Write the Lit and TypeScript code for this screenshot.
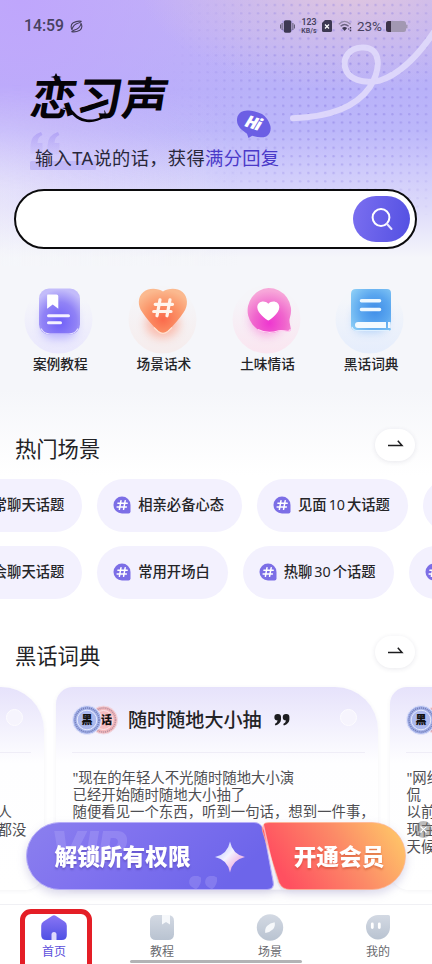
import { LitElement, html, css, svg } from "lit";
import { customElement, property } from "lit/decorators.js";

type Part = string | { num: string };

const CJK = css`"Noto Sans", "Noto Sans CJK SC", sans-serif`;

const quickIcons = {
  tutorial: svg`
    <defs>
      <radialGradient id="a1" cx=".5" cy=".72" r=".7"><stop offset="0" stop-color="#6f5ff8"/><stop offset=".6" stop-color="#9183f6"/><stop offset="1" stop-color="#c3bcfa"/></radialGradient>
      <linearGradient id="c1" x1="0" y1="0" x2="0" y2="1"><stop offset=".2" stop-color="#f5f6fa"/><stop offset="1" stop-color="#e9e7fd"/></linearGradient>
      <filter id="b1" x="-50%" y="-50%" width="200%" height="200%"><feGaussianBlur stdDeviation="5"/></filter>
    </defs>
    <circle cx="34.500" cy="34.500" r="34" fill="url(#c1)"/>
    <rect x="18" y="20" width="34" height="34" rx="10" fill="#8f83ff" opacity=".5" filter="url(#b1)"/>
    <rect x="15" y="3.500" width="41" height="46" rx="10" fill="url(#a1)"/>
    <path d="M17 43.500q3 5.500 9 5.500h19q6 0 9-5.500" fill="none" stroke="#e3deff" stroke-width="1.200"/>
    <path d="M23.500 9.500h9q1.800 0 1.800 1.800v12.500l-5.600-4.300-5.600 4.300v-12.500q0-1.800.4-1.800z" fill="#fff"/>
    <path d="M24.500 30.800h20M24.500 37.800h12" stroke="#f4f1ff" stroke-width="3" stroke-linecap="round"/>`,
  scene: svg`
    <defs>
      <radialGradient id="a2" cx=".5" cy=".68" r=".66"><stop offset="0" stop-color="#fb6a4b"/><stop offset=".55" stop-color="#fb9468"/><stop offset="1" stop-color="#fbb98f"/></radialGradient>
      <linearGradient id="c2" x1="0" y1="0" x2="0" y2="1"><stop offset=".2" stop-color="#f5f5f8"/><stop offset="1" stop-color="#f6ecec"/></linearGradient>
      <filter id="b2" x="-50%" y="-50%" width="200%" height="200%"><feGaussianBlur stdDeviation="5"/></filter>
    </defs>
    <circle cx="34.500" cy="34.500" r="34" fill="url(#c2)"/>
    <ellipse cx="34.500" cy="39" rx="17" ry="14" fill="#ff8060" opacity=".45" filter="url(#b2)"/>
    <path d="M35 6.500C30 3.300 21 2.400 15.500 7c-6 5-6 13.500-1.200 20.300C18 33 24 40 30 46q5 4.600 10 0c6-6 12-13 15.700-18.700C60.500 20.500 60 12 54.500 7 49 2.400 40 3.300 35 6.500z" fill="url(#a2)"/>
    <path d="M26 42.500l4.200 4q4.800 3.800 9.600 0l4.200-4" fill="none" stroke="#ffe0d0" stroke-width="1.200"/>
    <path d="M32 14.800l-3 16M42 14.800l-3 16M27.200 19.300h17.300M25.700 26.500H43" stroke="#fff4ec" stroke-width="3.200" stroke-linecap="round"/>`,
  love: svg`
    <defs>
      <radialGradient id="a3" cx=".5" cy=".78" r=".72"><stop offset="0" stop-color="#ee36d0"/><stop offset=".5" stop-color="#f065cd"/><stop offset="1" stop-color="#f7a7d9"/></radialGradient>
      <linearGradient id="c3" x1="0" y1="0" x2="0" y2="1"><stop offset=".2" stop-color="#f5f5f9"/><stop offset="1" stop-color="#fae5f0"/></linearGradient>
      <filter id="b3" x="-50%" y="-50%" width="200%" height="200%"><feGaussianBlur stdDeviation="5"/></filter>
    </defs>
    <circle cx="34.500" cy="34.500" r="34" fill="url(#c3)"/>
    <circle cx="35" cy="34" r="17" fill="#f462cf" opacity=".45" filter="url(#b3)"/>
    <path d="M36.500 3a22.500 22.500 0 0 1 21.300 30c-.6 2-.4 3.600.2 6.500l.8 4.300q.3 3-2.800 2.700c-3.500-.3-5.500-1.300-9-.4A22.500 22.500 0 1 1 36.500 3z" fill="url(#a3)"/>
    <path d="M26 44.500c7 3.600 14 3.500 20.500 1.300 3.500-1 5.500.3 9 .5q2.800.1 2.600-2.300" fill="none" stroke="#ffd5f2" stroke-width="1.100"/>
    <path d="M36.300 35.500c-2-1-11-7.300-11-13.300 0-6 7.500-7.600 11-3.400 3.500-4.200 11-2.600 11 3.400 0 6-9 12.300-11 13.300z" fill="#fff"/>`,
  dict: svg`
    <defs>
      <radialGradient id="a4" cx=".6" cy=".5" r=".72"><stop offset="0" stop-color="#3f8de8"/><stop offset=".5" stop-color="#5aa6ef"/><stop offset="1" stop-color="#8bcdf6"/></radialGradient>
      <linearGradient id="c4" x1="0" y1="0" x2="0" y2="1"><stop offset=".2" stop-color="#f4f6fa"/><stop offset="1" stop-color="#e5edfc"/></linearGradient>
      <filter id="b4" x="-50%" y="-50%" width="200%" height="200%"><feGaussianBlur stdDeviation="5"/></filter>
    </defs>
    <circle cx="34.500" cy="34.500" r="34" fill="url(#c4)"/>
    <rect x="19" y="22" width="32" height="25" rx="8" fill="#69a9f5" opacity=".45" filter="url(#b4)"/>
    <path d="M21 4h31q4 0 4 4v29.500q-2 3.500 0 7-.5 1-2 1H21q-5 0-5-5V9q0-5 5-5z" fill="url(#a4)"/>
    <path d="M17 42q1.500 3.500 5 3.500h32" fill="none" stroke="#dff0ff" stroke-width="1.100"/>
    <path d="M26.500 15.800h18M26.500 24.500h18" stroke="#eef8ff" stroke-width="3.600" stroke-linecap="round"/>
    <path d="M23 37h28v6H23a3 3 0 0 1 0-6zM53 37h2.500v1.500q-1.200 2 0 4.500H53z" fill="#f3faff"/>`,
};

const navIcons = {
  home: svg`
    <defs><linearGradient id="n1" x1="0" y1="0" x2="0" y2="1"><stop offset="0" stop-color="#8a76f4"/><stop offset="1" stop-color="#4f50e4"/></linearGradient></defs>
    <path d="M14 1.200q1 0 2 .7l8.500 5.600q2.300 1.500 2.300 4.300v9.200q0 5-5 5H6.200q-5 0-5-5v-9.200q0-2.800 2.300-4.300L12 1.900q1-.7 2-.7z" fill="url(#n1)"/>
    <path d="M11.500 26v-5.500a2.500 2.500 0 0 1 5 0V26z" fill="#ded9fd"/>`,
  book: svg`
    <defs><linearGradient id="n2" x1="0" y1="0" x2="0" y2="1"><stop offset="0" stop-color="#d3d9e3"/><stop offset="1" stop-color="#b9c3d1"/></linearGradient></defs>
    <rect x="2" y="1" width="24" height="25" rx="5.500" fill="url(#n2)"/>
    <path d="M14 1h8v9.500l-4-2.500-4 2.500z" fill="#f6f8fb"/>`,
  compass: svg`
    <defs><linearGradient id="n3" x1="0" y1="0" x2="0" y2="1"><stop offset="0" stop-color="#d3d9e3"/><stop offset="1" stop-color="#b9c3d1"/></linearGradient></defs>
    <circle cx="14" cy="13.500" r="13.200" fill="url(#n3)"/>
    <path d="M18.700 8.300q.8 4-1.700 7-3 3-7.700 3.700-.8-4 1.700-7 3-3 7.700-3.700z" fill="#f6f8fb"/>`,
  me: svg`
    <defs><linearGradient id="n4" x1="0" y1="0" x2="0" y2="1"><stop offset="0" stop-color="#d3d9e3"/><stop offset="1" stop-color="#b9c3d1"/></linearGradient></defs>
    <path d="M14 1h10.500q1.500 0 1.500 1.500V13.500A12 12.200 0 1 1 14 1z" fill="url(#n4)"/>
    <path d="M8.300 10v3.500M15.300 10v3.500" stroke="#fff" stroke-width="2.800" stroke-linecap="round"/>`,
};

@customElement("topic-pill")
class TopicPill extends LitElement {
  @property({ attribute: false }) parts: Part[] = [];
  static styles = css`
    :host { display: flex; flex: none; align-items: center; height: 52.500px; box-sizing: border-box; padding: 0 18px 0 16px; border-radius: 27px; background: #f3f1fe; font: 500 14.300px/20px ${CJK}; color: #252528; white-space: nowrap; }
    svg { width: 18px; height: 18px; margin-right: 7px; flex: none; }
    .num { margin: 0 2px; font-weight: 400; }
  `;
  render() {
    return html`<svg viewBox="0 0 18 18">
        <path d="M9 .5A8.500 8.500 0 0 1 17.500 9v6.500q0 2-2 2H9A8.500 8.500 0 0 1 9 .5z" fill="#7c6ee6"/>
        <path d="M8 4.700L6.400 13.300M12.200 4.700L10.600 13.300M4.900 7.200h9.300M4.100 11h9.300" stroke="#fff" stroke-width="1.500" stroke-linecap="round"/>
      </svg>${this.parts.map((p) => (typeof p === "string" ? p : html`<span class="num">${p.num}</span>`))}`;
  }
}

@customElement("section-head")
class SectionHead extends LitElement {
  @property() label = "";
  static styles = css`
    :host { display: flex; align-items: center; justify-content: space-between; height: 32px; padding: 0 17px 0 15px; font: 400 21.300px/32px ${CJK}; color: #232326; }
    .go { width: 40px; height: 32px; border-radius: 16px; background: #fff; box-shadow: 0 1px 5px rgba(40, 40, 80, 0.1); }
    .label { padding-top: 7px; }
    svg { display: block; }
  `;
  render() {
    return html`<span class="label">${this.label}</span>
      <div class="go"><svg width="40" height="32" viewBox="0 0 40 32"><path d="M13 16.600h14l-4.200-4.800" fill="none" stroke="#1c1c1e" stroke-width="1.500"/></svg></div>`;
  }
}

@customElement("slang-card")
class SlangCard extends LitElement {
  @property() heading = "";
  @property({ attribute: false }) lines: string[] = [];
  static styles = css`
    :host { display: block; flex: none; width: 322px; height: 203px; box-sizing: border-box; border-radius: 17px 43px 20px 20px; background: linear-gradient(#e6e2fb 0, #f2f0fd 38px, #fefeff 76px, #fff 100%); box-shadow: 0 1px 4px rgba(80, 80, 120, 0.07); font-family: ${CJK}; }
    .top { display: flex; align-items: center; height: 65px; margin: 0 13px 0 16px; border-bottom: 1px solid #efedf7; }
    .badge { width: 47px; height: 32px; margin-right: 9px; }
    .badge text { font: 900 11px "Noto Sans CJK SC", sans-serif; fill: #111; }
    .title { font-size: 19.100px; line-height: 28px; color: #232326; font-weight: 500; white-space: nowrap; }
    .quote { width: 16px; height: 12px; margin-left: 12px; }
    .dot { width: 15px; height: 15px; border-radius: 50%; margin: -5px 8px 0 auto; background: #f6f4fd; border: 1px solid #fdfcff; }
    .body { padding: 16px 0 0 16.500px; font-size: 14.400px; line-height: 17.200px; color: #4e4e52; white-space: pre; }
  `;
  render() {
    return html`<div class="top">
        <svg class="badge" viewBox="0 0 47 32">
          <circle cx="31.500" cy="16" r="14" fill="#f4b9bd" stroke="#f0d9e4"/>
          <circle cx="31.500" cy="16" r="12" fill="none" stroke="#9f7f95" stroke-width="1.600" stroke-dasharray="1.200 .8" opacity=".65"/>
          <circle cx="31.500" cy="16" r="9.500" fill="#f5bdc0" stroke="#fae3e8"/>
          <circle cx="15" cy="16" r="14.500" fill="#a9b6ec" stroke="#e6e6fb"/>
          <circle cx="15" cy="16" r="12" fill="none" stroke="#5e68a5" stroke-width="1.600" stroke-dasharray="1.200 .8" opacity=".7"/>
          <circle cx="15" cy="16" r="9.800" fill="#acb9ee" stroke="#e4e8fc"/>
          <text x="9.500" y="20">黑</text><text x="29" y="20">话</text>
        </svg>
        <span class="title">${this.heading}</span>
        <svg class="quote" viewBox="0 0 16 12"><path d="M3.600 0h.4a3 3 0 0 1 3 3v2.500Q6.800 9.500 1.500 11.500L.8 10Q3.400 8.700 3.600 6.500A3.200 3.200 0 0 1 3.600 0zM12 0h.4a3 3 0 0 1 3 3v2.500q-.2 4-5.500 6L9.200 10q2.600-1.300 2.800-3.500A3.200 3.200 0 0 1 12 0z" fill="#1d1d20"/></svg>
        <span class="dot"></span>
      </div>
      <div class="body">${this.lines.join("\n")}</div>`;
  }
}

const INDENT = "\u3000".repeat(18);

@customElement("app-root")
class AppRoot extends LitElement {
  static styles = css`
    :host { display: flex; flex-direction: column; position: relative; width: 432px; height: 964px; overflow: hidden; background: linear-gradient(#f5f6fa 0, #f5f6fa 390px, #fff 475px); font-family: ${CJK}; color: #252528; }
    svg { display: block; flex: none; }
    .hero { position: relative; height: 266px; flex: none; background: radial-gradient(ellipse 210px 105px at 350px -15px, rgba(228, 200, 220, 0.95) 0, rgba(218, 195, 225, 0.5) 50%, rgba(200, 185, 240, 0) 100%), radial-gradient(ellipse 250px 250px at 20px 0, #bfa6fc 0, rgba(191, 168, 252, 0) 100%), linear-gradient(#c2b4f7 0, #b9b2f9 90px, #bcb7fa 130px, #cfcbfb 172px, #dcd9fa 205px, #f5f6fa 258px); }
    .fade { position: absolute; inset: 0; background: linear-gradient(90deg, rgba(245, 246, 250, 0.55), rgba(245, 246, 250, 0) 55%); -webkit-mask: linear-gradient(transparent 85px, #000 190px); mask: linear-gradient(transparent 85px, #000 190px); }
    .art { position: absolute; inset: 0; }
    .art text { font: italic 800 17px "Open Sans", sans-serif; fill: #fff; }
    .front { position: relative; }
    .status { display: flex; align-items: center; height: 52px; padding: 0 24px 0 24px; color: #47415f; font: 500 15.800px/20px Roboto, sans-serif; }
    .status .spin { margin-left: 6px; margin-right: auto; }
    .rate { width: 20px; margin: 0 3px 0 4px; text-align: center; font-size: 8.800px; line-height: 9px; font-weight: 600; white-space: nowrap; display: flex; flex-direction: column; align-items: center; }
    .rate span + span { font-size: 7px; line-height: 8px; }
    .pct { font-size: 13.500px; margin: 0 4px 0 5px; font-weight: 400; }
    .wifi { margin-left: 6px; }
    .logo { margin: 18px 0 0 28px; overflow: visible; }
    .logo text { font: 700 45px "Noto Sans CJK SC", sans-serif; fill: #050308; }
    .tag { margin: 18px 0 0 35px; font-size: 18.250px; letter-spacing: 0.35px; line-height: 28px; color: #29273a; white-space: nowrap; }
    .tag b { font-weight: 400; color: #4a39c8; }
    .search { display: flex; align-items: center; justify-content: flex-end; box-sizing: border-box; width: 403px; height: 60px; margin: 17px 0 0 14px; border: 2px solid #0b0b0d; border-radius: 30px; background: #fff; padding-right: 5px; }
    .find { display: flex; align-items: center; justify-content: center; width: 57px; height: 46px; border-radius: 23px; background: linear-gradient(100deg, #7b6ff0, #5350e2); }
    .quick { display: flex; padding: 19px 9px 0 8.500px; flex: none; }
    .q { width: 103.700px; display: flex; flex-direction: column; align-items: center; font: 500 13.700px/20px ${CJK}; color: #232326; }
    .q svg { width: 69px; height: 69px; margin-right: 3px; }
    section-head.hot { margin-top: 55px; flex: none; }
    section-head.dict { margin-top: 37.500px; flex: none; }
    .row { display: flex; gap: 15px; flex: none; }
    .r1 { margin: 18px 0 0 -62.500px; }
    .r2 { margin: 14.500px 0 0 -62.500px; }
    .cards { display: flex; gap: 12px; margin: 19px 0 0 -278px; }
    .offer { position: absolute; left: 26px; top: 822px; width: 380px; height: 68px; display: flex; align-items: center; filter: drop-shadow(0 4px 5px rgba(70, 60, 150, 0.2)); }
    .offer > svg { position: absolute; left: 0; top: 0; overflow: visible; }
    .offer .vip { font: italic 900 44px "Inter", sans-serif; fill: #b8aff9; opacity: 0.3; }
    .offer span { position: relative; font: 900 22.700px/32px "Noto Sans CJK SC", sans-serif; color: #fff; text-shadow: 0 2px 2px rgba(60, 40, 140, 0.35); margin-top: -1px; white-space: nowrap; }
    .offer .l { margin-left: 28.500px; }
    .offer .r { margin-left: 103px; text-shadow: 0 2px 2px rgba(180, 60, 30, 0.4); }
    .close { position: absolute; left: 415px; top: 821px; width: 17px; height: 17px; }
    .nav { position: absolute; left: 0; right: 0; bottom: 0; height: 60px; box-sizing: border-box; border-top: 1px solid #f0f0f4; background: #fff; display: flex; }
    .n { flex: 1; display: flex; flex-direction: column; align-items: center; padding-top: 8.500px; font-size: 12px; line-height: 18px; color: #68696e; }
    .n span { margin-top: 2px; }
    .n.on { color: #5c4fdc; }
    .bar { position: absolute; left: 130px; top: 960px; width: 172px; height: 3px; border-radius: 2px; background: #b3b3b5; }
    .mark { position: absolute; left: 20px; top: 909px; width: 72px; height: 80px; box-sizing: border-box; border: 5px solid #e41e26; border-radius: 11px; }
  `;

  render() {
    const quick = [
      [quickIcons.tutorial, "案例教程"],
      [quickIcons.scene, "场景话术"],
      [quickIcons.love, "土味情话"],
      [quickIcons.dict, "黑话词典"],
    ];
    const nav = [
      [navIcons.home, "首页"],
      [navIcons.book, "教程"],
      [navIcons.compass, "场景"],
      [navIcons.me, "我的"],
    ];
    const rows: Part[][][] = [
      [["日常聊天话题"], ["相亲必备心态"], ["见面", { num: "10" }, "大话题"], [""]],
      [["约会聊天话题"], ["常用开场白"], ["热聊", { num: "30" }, "个话题"], [""]],
    ];
    return html`
      <div class="hero">
        <div class="fade"></div>
        <svg class="art" width="432" height="266" viewBox="0 0 432 266">
          <defs>
            <pattern id="dots" x="2" y="1" width="8.400" height="8.400" patternUnits="userSpaceOnUse"><circle cx="4" cy="4" r="1.200" fill="#8c7fe2"/></pattern>
            <radialGradient id="dm" gradientUnits="userSpaceOnUse" cx="340" cy="80" r="170"><stop offset="0" stop-color="#fff" stop-opacity=".62"/><stop offset=".5" stop-color="#fff" stop-opacity=".4"/><stop offset="1" stop-color="#fff" stop-opacity="0"/></radialGradient>
            <mask id="mk"><rect width="432" height="266" fill="url(#dm)"/></mask>
            <linearGradient id="qg" x1="0" y1="0" x2="0" y2="1"><stop offset="0" stop-color="#a493f2"/><stop offset="1" stop-color="#b9adf6" stop-opacity=".3"/></linearGradient>
          </defs>
          <rect width="432" height="215" fill="url(#dots)" mask="url(#mk)"/>
          <path d="M293 118.200C330 117 356 107 370 87C381 69 382 46 361.500 47.500C349 48 343 58 345 67C348 80 363 84 380 80.500C403 73 421 52 436 29" fill="none" stroke="#dfd9fb" stroke-opacity=".92" stroke-width="6" stroke-linecap="round" stroke-linejoin="round"/>
          <path d="M249 110.500q-9-.8-11.500 6-2.200 8 4.500 13.500 3 2.300 5 3.800l1.500 4.200 3.700-2.300q8 2.800 14 .7 5.500-3 4.200-10.500Q268 118 262 114q-6-3-13-3.500z" fill="#6c5fe4"/>
          <text transform="translate(244 126) rotate(19)" textLength="16">Hi</text>
          <path d="M41 132q-10 3-10.500 13v9h12v-11h-5q0-6 5-8zM58 132q-10 3-10.500 13v9h12v-11h-5q0-6 5-8z" fill="url(#qg)" opacity=".6"/>
          <rect x="30" y="161" width="66" height="9" rx="1.500" fill="#aca2f4" opacity=".5"/>
        </svg>
        <div class="front">
          <div class="status">
            <span>14:59</span>
            <svg class="spin" width="13" height="13" viewBox="0 0 13 13"><path d="M2 9.800Q-.2 5 3.200 2.800 7 .6 11.300 1.300 10.500 2.600 6.500 3.800 2.500 6 2 9.800zM11 3.200Q13.200 8 9.800 10.200 6 12.400 1.700 11.700 2.500 10.400 6.500 9.200 10.500 7 11 3.200z" fill="none" stroke="#47415f" stroke-width="1.100" stroke-linejoin="round"/></svg>
            <svg width="15" height="13" viewBox="0 0 15 13"><rect x="3.800" y=".3" width="7.500" height="12.400" rx="1.800" fill="#3d3852"/><path d="M2.100 3v7M.6 4.500v4M12.900 3v7M14.400 4.500v4" stroke="#5a536f" stroke-width="1"/></svg>
            <div class="rate"><span>123</span><span>KB/s</span></div>
            <svg width="10" height="12" viewBox="0 0 10 12"><path d="M3 0h5.500Q10 0 10 1.500v9q0 1.500-1.500 1.500h-7Q0 12 0 10.500V3z" fill="#3d3852"/><path d="M3 4.500l4 4M7 4.500l-4 4" stroke="#fff" stroke-width="1.200"/></svg>
            <svg class="wifi" width="14" height="12" viewBox="0 0 14 12"><path d="M.8 4.200Q6.500-1.500 12.500 4.200" fill="none" stroke="#9389a5" stroke-width="1.300"/><path d="M2.600 6.300Q6.600 2.600 10.600 6.300" fill="none" stroke="#6d6483" stroke-width="1.400"/><path d="M4 8q2.600-2 5.200 0L6.600 11z" fill="#3d3852"/><path d="M12.500 7v1.500M12.500 9.700v1.500M10.600 8.500v1" stroke="#3d3852" stroke-width="1.300"/></svg>
            <span class="pct">23%</span>
            <svg width="22" height="11" viewBox="0 0 22 11"><rect width="20" height="11" rx="2.500" fill="#a298b2"/><path d="M2.500 0H5v11H2.500Q0 11 0 8.500v-6Q0 0 2.500 0z" fill="#3d3348"/><rect x="20" y="3.500" width="1.500" height="4" rx=".7" fill="#a298b2"/></svg>
          </div>
          <svg class="logo" width="145" height="56" viewBox="0 0 145 56">
            <g transform="skewX(-9)">
              <text x="8" y="45" textLength="137" lengthAdjust="spacingAndGlyphs">恋习声</text>
            </g>
            <path d="M34 38c10-2 11 5 18 9 9 5 19 2 24-2 1-2 .5-3 0-5 2.500 2 2 5.500.5 7-6 5-17 7-25 3-8-4-9-10-17.500-12z" fill="#050308"/>
            <path d="M28 3l1.500 3 4 1-4 1L28 11l-1.500-3-4-1 4-1z" fill="#050308"/>
          </svg>
          <div class="tag">输入TA说的话，获得<b>满分回复</b></div>
          <div class="search"><div class="find"><svg width="24" height="26" viewBox="0 0 24 26"><circle cx="11" cy="11.500" r="8.400" fill="none" stroke="#fff" stroke-width="2"/><path d="M17 18l4.500 5" stroke="#e8e6ff" stroke-width="2" stroke-linecap="round"/></svg></div></div>
        </div>
      </div>
      <div class="quick">${quick.map(([icon, label]) => html`<div class="q"><svg viewBox="0 0 69 69">${icon}</svg><span>${label}</span></div>`)}</div>
      <section-head class="hot" label="热门场景"></section-head>
      ${rows.map((r, i) => html`<div class="row ${i ? "r2" : "r1"}">${r.map((p) => html`<topic-pill .parts=${p}></topic-pill>`)}</div>`)}
      <section-head class="dict" label="黑话词典"></section-head>
      <div class="cards">
        <slang-card .lines=${["", "", INDENT + "人", INDENT + "都没"]}></slang-card>
        <slang-card heading="随时随地大小抽" .lines=${['"现在的年轻人不光随时随地大小演', "已经开始随时随地大小抽了", "随便看见一个东西，听到一句话，想到一件事，"]}></slang-card>
        <slang-card .lines=${['"网络', "侃", "以前", "现在", "天候"]}></slang-card>
      </div>
      <div class="offer">
        <svg width="380" height="68" viewBox="0 0 380 68">
          <defs>
            <linearGradient id="o1" x1="0" y1="0" x2="1" y2=".3"><stop offset="0" stop-color="#8b80ee"/><stop offset=".4" stop-color="#8173ef"/><stop offset="1" stop-color="#6d65ea"/></linearGradient>
            <linearGradient id="o2" x1="0" y1=".3" x2="1" y2="0"><stop offset="0" stop-color="#ff5060"/><stop offset=".5" stop-color="#fc8b67"/><stop offset="1" stop-color="#ffcf68"/></linearGradient>
            <linearGradient id="sp" x1="0" y1="0" x2="1" y2="1"><stop offset="0" stop-color="#a8b9ff"/><stop offset=".45" stop-color="#f4f2ff"/><stop offset=".7" stop-color="#f0bfe8"/><stop offset="1" stop-color="#7f8bff"/></linearGradient>
          </defs>
          <path d="M34 .5H228q7 0 9.500 7L247 59q2 8.500-6 8.500H34A33.500 33.500 0 0 1 34 .5z" fill="url(#o1)" stroke="#b6adf8" stroke-width="1"/>
          <path d="M243 .5H346A33.500 33.500 0 0 1 346 67.500H264q-8 0-11-7L236.500 9q-2-8.500 6.500-8.500z" fill="url(#o2)" stroke="#ffb392" stroke-opacity=".7"/>
          <path d="M237.500 .5L251 60q2 5 4 7.500h-9q3-3 2-8L238 9q-2-6-5-8z" fill="#fff" opacity=".55"/>
          <text class="vip" x="24" y="41">VIP</text>
          <path d="M172 54h-4a6 6 0 0 0-2 11l4 2.500q6-5 5-12zM188 54h-4a6 6 0 0 0-2 11l4 2.500q6-5 5-12z" fill="#a59bf6" opacity=".4"/>
          <path d="M204 19.500Q206.500 32.500 219 35 206.500 37.500 204 50.500 201.500 37.500 189 35 201.500 32.500 204 19.500z" fill="url(#sp)"/>
        </svg>
        <span class="l">解锁所有权限</span><span class="r">开通会员</span>
      </div>
      <svg class="close" viewBox="0 0 17 17"><circle cx="8.500" cy="8.500" r="8.500" fill="#777" opacity=".5"/><path d="M5.500 5.500l6 6M11.500 5.500l-6 6" stroke="#fff" stroke-width="1.200"/></svg>
      <div class="nav">${nav.map(([icon, label], i) => html`<div class="n ${i ? "" : "on"}"><svg width="28" height="27" viewBox="0 0 28 27">${icon}</svg><span>${label}</span></div>`)}</div>
      <div class="bar"></div>
      <div class="mark"></div>
    `;
  }
}
